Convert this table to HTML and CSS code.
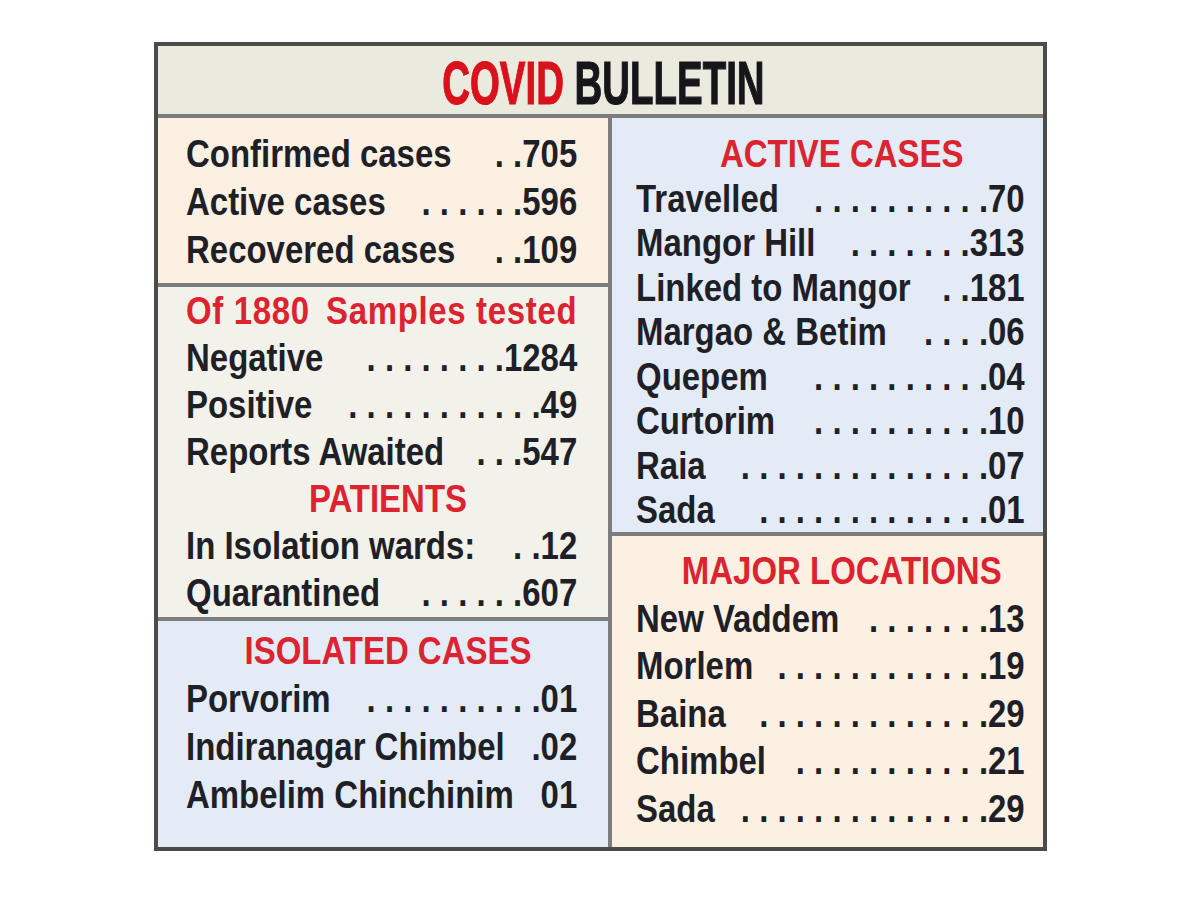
FILE: index.html
```html
<!DOCTYPE html>
<html lang="en">
<head>
<meta charset="utf-8">
<title>Covid Bulletin</title>
<link rel="stylesheet" href="styles.css">
</head>
<body>
<div class="page">
  <div class="bulletin">
    <div class="header">
      <h1 class="title"><span class="red">COVID</span> BULLETIN</h1>
    </div>
    <div class="col col-left">
      <section class="sec peach sec-l1">
        <div class="inner">
          <div class="row"><span>Confirmed cases</span><span>. .705</span></div>
          <div class="row"><span>Active cases</span><span>. . . . . .596</span></div>
          <div class="row"><span>Recovered cases</span><span>. .109</span></div>
        </div>
      </section>
      <section class="sec grey sec-l2">
        <div class="inner">
          <div class="row subhead"><span>Of 1880</span><span>Samples tested</span></div>
          <div class="row"><span>Negative</span><span>. . . . . . . .1284</span></div>
          <div class="row"><span>Positive</span><span>. . . . . . . . . . .49</span></div>
          <div class="row"><span>Reports Awaited</span><span>. . .547</span></div>
          <div class="row head head-l">PATIENTS</div>
          <div class="row"><span>In Isolation wards:</span><span>. .12</span></div>
          <div class="row"><span>Quarantined</span><span>. . . . . .607</span></div>
        </div>
      </section>
      <section class="sec blue sec-l3">
        <div class="inner">
          <div class="row head head-l">ISOLATED CASES</div>
          <div class="row"><span>Porvorim</span><span>. . . . . . . . . .01</span></div>
          <div class="row"><span>Indiranagar Chimbel</span><span>.02</span></div>
          <div class="row"><span>Ambelim Chinchinim</span><span>01</span></div>
        </div>
      </section>
    </div>
    <div class="col col-right">
      <section class="sec blue sec-r1">
        <div class="inner">
          <div class="row head head-r">ACTIVE CASES</div>
          <div class="row"><span>Travelled</span><span>. . . . . . . . . .70</span></div>
          <div class="row"><span>Mangor Hill</span><span>. . . . . . .313</span></div>
          <div class="row"><span>Linked to Mangor</span><span>. .181</span></div>
          <div class="row"><span>Margao &amp; Betim</span><span>. . . .06</span></div>
          <div class="row"><span>Quepem</span><span>. . . . . . . . . .04</span></div>
          <div class="row"><span>Curtorim</span><span>. . . . . . . . . .10</span></div>
          <div class="row"><span>Raia</span><span>. . . . . . . . . . . . . .07</span></div>
          <div class="row"><span>Sada</span><span>. . . . . . . . . . . . .01</span></div>
        </div>
      </section>
      <section class="sec peach sec-r2">
        <div class="inner">
          <div class="row head head-r">MAJOR LOCATIONS</div>
          <div class="row"><span>New Vaddem</span><span>. . . . . . .13</span></div>
          <div class="row"><span>Morlem</span><span>. . . . . . . . . . . .19</span></div>
          <div class="row"><span>Baina</span><span>. . . . . . . . . . . . .29</span></div>
          <div class="row"><span>Chimbel</span><span>. . . . . . . . . . .21</span></div>
          <div class="row"><span>Sada</span><span>. . . . . . . . . . . . . .29</span></div>
        </div>
      </section>
    </div>
  </div>
</div>
</body>
</html>
```

FILE: styles.css
```css
html, body {
  margin: 0;
  background: #ffffff;
}

body {
  font-family: "Liberation Sans", Arial, sans-serif;
  font-weight: 700;
  color: #1f1f27;
}

.page {
  padding: 42px 0 0 154px;
}

.bulletin {
  width: 893px;
  height: 809px;
  box-sizing: border-box;
  border: 4px solid #4b4b4b;
  background: #7c7c7c;
  display: grid;
  grid-template-columns: 450px 431px;
  grid-template-rows: 68px 729px;
  column-gap: 4px;
  row-gap: 4px;
}

.header {
  grid-column: 1 / -1;
  background: #ebeadf;
  display: flex;
  align-items: center;
  justify-content: center;
}

.title {
  margin: 8px 0 0 0;
  font-size: 61px;
  line-height: 1.1;
  font-weight: 700;
  color: #16161a;
  transform: scaleX(0.63);
  padding-left: 8px;
  white-space: nowrap;
  -webkit-text-stroke: 1.2px currentColor;
}

.red {
  color: #d9111c;
}

.col {
  display: flex;
  flex-direction: column;
  gap: 4px;
  min-width: 0;
}

.sec {
  box-sizing: border-box;
  font-size: 39px;
  flex: none;
}

.inner {
  transform: scaleX(0.845);
  transform-origin: 0 0;
}

.col-left .sec {
  padding-left: 28px;
}

.col-left .inner {
  width: 463px;
}

.col-right .sec {
  padding-left: 24px;
}

.col-right .inner {
  width: 460px;
}

.peach { background: #fcf0e2; }
.grey  { background: #f2f1ea; }
.blue  { background: #e3ebf6; }

.sec-l1 { height: 165px; padding-top: 12px; line-height: 48px; }
.sec-l2 { height: 330px; padding-top: 0; line-height: 47px; }
.sec-l3 { height: 226px; padding-top: 6px; line-height: 48px; }
.sec-r1 { height: 414px; padding-top: 14px; line-height: 44.5px; }
.sec-r2 { height: 311px; padding-top: 11px; line-height: 47.5px; }

.row {
  display: flex;
  justify-content: space-between;
  white-space: nowrap;
}

.head {
  display: block;
  text-align: center;
  color: #dc2330;
}

.head-l { padding-left: 15px; }
.head-r { padding-left: 27px; }

.subhead {
  color: #dc2330;
  letter-spacing: 0.8px;
}
```
